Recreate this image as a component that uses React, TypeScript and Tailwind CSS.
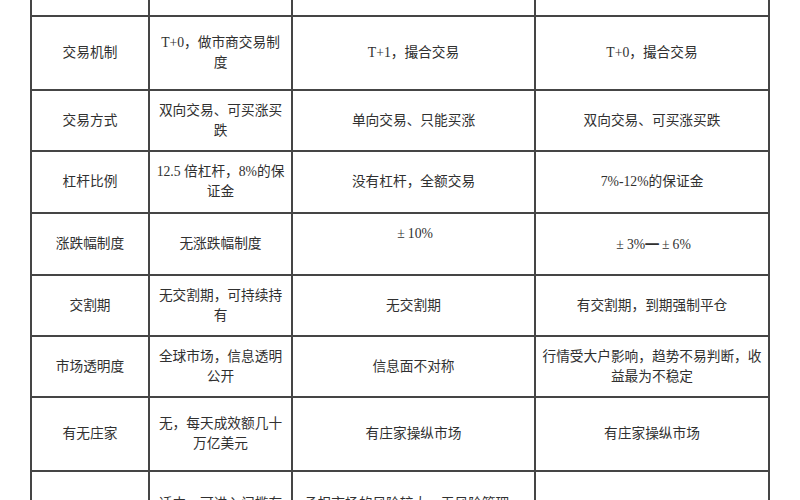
import React from "react";

type Row = { h: string; cells: React.ReactNode[]; top?: boolean };

const Pm = () => <span className="inline-block w-[13.7px] text-center">±</span>;

const rows: Row[] = [
  { h: "h-[17px]", cells: ["", "", "", ""] },
  { h: "h-[74px]", cells: ["交易机制", "T+0，做市商交易制度", "T+1，撮合交易", "T+0，撮合交易"] },
  { h: "h-[61px]", cells: ["交易方式", "双向交易、可买涨买跌", "单向交易、只能买涨", "双向交易、可买涨买跌"] },
  { h: "h-[62px]", cells: ["杠杆比例", "12.5 倍杠杆，8%的保证金", "没有杠杆，全额交易", "7%-12%的保证金"] },
  {
    h: "h-[62px]",
    cells: [
      "涨跌幅制度",
      "无涨跌幅制度",
      <>
        <Pm />
        10%
        <br />
        &nbsp;
      </>,
      <>
        <Pm />
        3%
        <span style={{ fontFamily: '"Noto Sans CJK SC", sans-serif' }}>━</span>
        <Pm />
        6%
      </>,
    ],
  },
  { h: "h-[61px]", cells: ["交割期", "无交割期，可持续持有", "无交割期", "有交割期，到期强制平仓"] },
  { h: "h-[61px]", cells: ["市场透明度", "全球市场，信息透明公开", "信息面不对称", "行情受大户影响，趋势不易判断，收益最为不稳定"] },
  { h: "h-[74px]", cells: ["有无庄家", "无，每天成效额几十万亿美元", "有庄家操纵市场", "有庄家操纵市场"] },
  {
    h: "h-[80px]",
    top: true,
    cells: ["", "适中，可进入门槛有限制", "承担市场的风险较大，无风险管理，风险自负", ""],
  },
];

const widths = ["w-[118px]", "w-[143px]", "w-[243px]", "w-[234px]"];

export default function App() {
  return (
    <div
      className="w-[800px] h-[500px] overflow-hidden bg-white text-[#303030] text-[13.7px] leading-[20px]"
      style={{ fontFamily: '"Liberation Serif", "Noto Sans CJK SC", serif' }}
    >
      <div className="ml-[30px] w-[740px] border-l-2 border-[#454545] flex flex-col">
        {rows.map((r, i) => (
          <div key={i} className={`flex shrink-0 border-b-2 border-[#454545] ${r.h}`}>
            {r.cells.map((c, j) => (
              <div
                key={j}
                className={`${widths[j]} shrink-0 border-r-2 border-[#454545] flex justify-center px-[5px] text-center ${
                  r.top ? "items-start pt-[22px]" : "items-center"
                }`}
              >
                <div>{c}</div>
              </div>
            ))}
          </div>
        ))}
      </div>
    </div>
  );
}
